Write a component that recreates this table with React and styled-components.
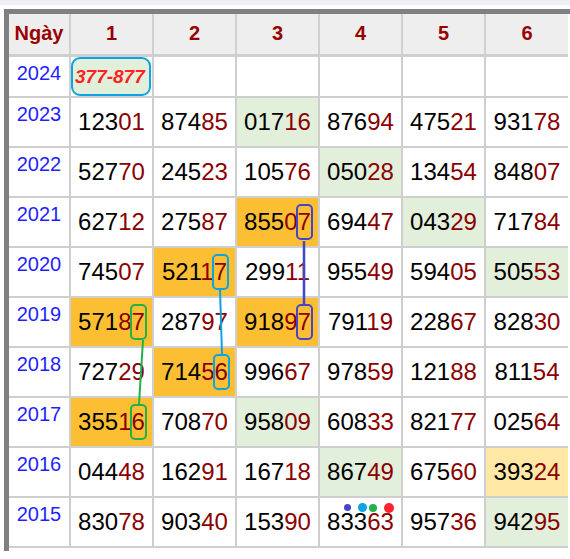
import React from 'react'
import styled, { createGlobalStyle } from 'styled-components'

const GlobalStyle = createGlobalStyle`
  html, body {
    margin: 0;
    padding: 0;
    background: #fff;
    font-family: "Liberation Sans", Arial, sans-serif;
  }
`

const colors = {
  year: '#1f1fff',
  head: '#990000',
  tail: '#8b0000',
  orange: '#fcbf33',
  green: '#e2efda',
  yellow: '#ffe7a6',
  line: '#cfcfcf',
  frame: '#808080',
}

const marks = {
  purple: '#4545c8',
  cyan: '#0ba3e2',
  green: '#22b04a',
  red: '#ff2030',
}

const Page = styled.div`
  position: relative;
  width: 570px;
  height: 559px;
  overflow: hidden;
`

const TopStrip = styled.div`
  height: 5px;
  background: #eef0f4;
  margin-bottom: 4px;
`

const Frame = styled.div`
  margin-left: 4px;
  border-top: 5px solid ${colors.frame};
  border-left: 5px solid ${colors.frame};
  padding-bottom: 3px;
  width: 570px;
`

const Table = styled.table`
  border-collapse: collapse;
  table-layout: fixed;
  width: 559px;
`

const HeadCell = styled.th`
  width: ${props => (props.$first ? '61px' : '83px')};
  box-sizing: border-box;
  height: 41px;
  padding: 0;
  background: #eeeeee;
  color: ${colors.head};
  font-size: 20px;
  font-weight: bold;
  text-align: center;
  vertical-align: middle;
  border-left: 2px solid ${colors.line};
  border-bottom: 3px solid ${colors.line};
  &:first-child {
    border-left: none;
  }
`

const Row = styled.tr`
  height: ${props => (props.$short ? '40px' : '50px')};
`

const YearCell = styled.td`
  padding: 5px 0 0;
  color: ${colors.year};
  font-size: 20px;
  text-align: center;
  vertical-align: top;
  border-bottom: 2px solid ${colors.line};
`

const NumCell = styled.td`
  position: relative;
  padding: 0;
  background: ${props => props.$bg || '#fff'};
  color: #000;
  font-size: 24px;
  text-align: center;
  vertical-align: middle;
  border-left: 2px solid ${colors.line};
  border-bottom: 2px solid ${colors.line};
  white-space: nowrap;
`

const Tail = styled.span`
  color: ${colors.tail};
`

const Mark = styled.span`
  display: inline-block;
  line-height: 26px;
  padding: 3px 0;
  border: 2px solid ${props => props.$color};
  border-radius: 5px;
  margin: -7px -2px;
`

const Predict = styled.div`
  box-sizing: border-box;
  height: 39px;
  margin: 0 1px 0 0;
  border: 2px solid ${marks.cyan};
  border-radius: 9px;
  background: ${colors.green};
  color: #ff2222;
  font-size: 19px;
  font-weight: bold;
  font-style: italic;
  text-align: left;
  padding-left: 2px;
  line-height: 35px;
`

const Dots = styled.div`
  position: absolute;
  top: 5px;
  left: 24px;
  display: flex;
  align-items: center;
  gap: 4px;
`

const Dot = styled.span`
  width: ${props => props.$size}px;
  height: ${props => props.$size}px;
  border-radius: 50%;
  background: ${props => props.$color};
  margin-left: ${props => props.$gap || 0}px;
`

const Overlay = styled.svg`
  position: absolute;
  top: 0;
  left: 0;
  pointer-events: none;
`

const rows = [
  ['2023', ['12301', '87485', ['01716', 'green'], '87694', '47521', '93178']],
  ['2022', ['52770', '24523', '10576', ['05028', 'green'], '13454', '84807']],
  ['2021', ['62712', '27587', ['85507', 'orange', 'purple'], '69447', ['04329', 'green'], '71784']],
  ['2020', ['74507', ['52117', 'orange', 'cyan'], '29911', '95549', '59405', ['50553', 'green']]],
  ['2019', [['57187', 'orange', 'green'], '28797', ['91897', 'orange', 'purple'], '79119', '22867', '82830']],
  ['2018', ['72729', ['71456', 'orange', 'cyan'], '99667', '97859', '12188', '81154']],
  ['2017', [['35516', 'orange', 'green'], '70870', ['95809', 'green'], '60833', '82177', '02564']],
  ['2016', ['04448', '16291', '16718', ['86749', 'green'], '67560', ['39324', 'yellow']]],
  ['2015', ['83078', '90340', '15390', ['83363', null, null, true], '95736', ['94295', 'green']]],
]

const Number = ({ value, mark }) => (
  <>
    {value.slice(0, 3)}
    <Tail>
      {value[3]}
      {mark ? <Mark $color={marks[mark]}>{value[4]}</Mark> : value[4]}
    </Tail>
  </>
)

const App = () => (
  <Page>
    <GlobalStyle />
    <TopStrip />
    <Frame>
      <Table>
        <thead>
          <tr>
            <HeadCell $first>Ngày</HeadCell>
            {[1, 2, 3, 4, 5, 6].map(n => (
              <HeadCell key={n}>{n}</HeadCell>
            ))}
          </tr>
        </thead>
        <tbody>
          <Row $short>
            <YearCell>2024</YearCell>
            <NumCell>
              <Predict>377-877</Predict>
            </NumCell>
            {[2, 3, 4, 5, 6].map(n => (
              <NumCell key={n} />
            ))}
          </Row>
          {rows.map(([year, cells]) => (
            <Row key={year}>
              <YearCell>{year}</YearCell>
              {cells.map((c, i) => {
                const [value, bg, mark, dots] = Array.isArray(c) ? c : [c]
                return (
                  <NumCell key={i} $bg={bg && colors[bg]}>
                    {dots && (
                      <Dots>
                        <Dot $size={7} $color={marks.purple} />
                        <Dot $size={9} $color={marks.cyan} $gap={3} />
                        <Dot $size={8} $color={marks.green} $gap={-2} />
                        <Dot $size={10} $color={marks.red} $gap={3} />
                      </Dots>
                    )}
                    <Number value={value} mark={mark} />
                  </NumCell>
                )
              })}
            </Row>
          ))}
        </tbody>
      </Table>
    </Frame>
    <Overlay width="570" height="559">
      <line x1="304" y1="241" x2="304" y2="306" stroke={marks.purple} strokeWidth="2.5" />
      <line x1="220" y1="289" x2="222" y2="355" stroke={marks.cyan} strokeWidth="2" />
      <line x1="143" y1="340" x2="139" y2="404" stroke={marks.green} strokeWidth="2" />
    </Overlay>
  </Page>
)

export default App
